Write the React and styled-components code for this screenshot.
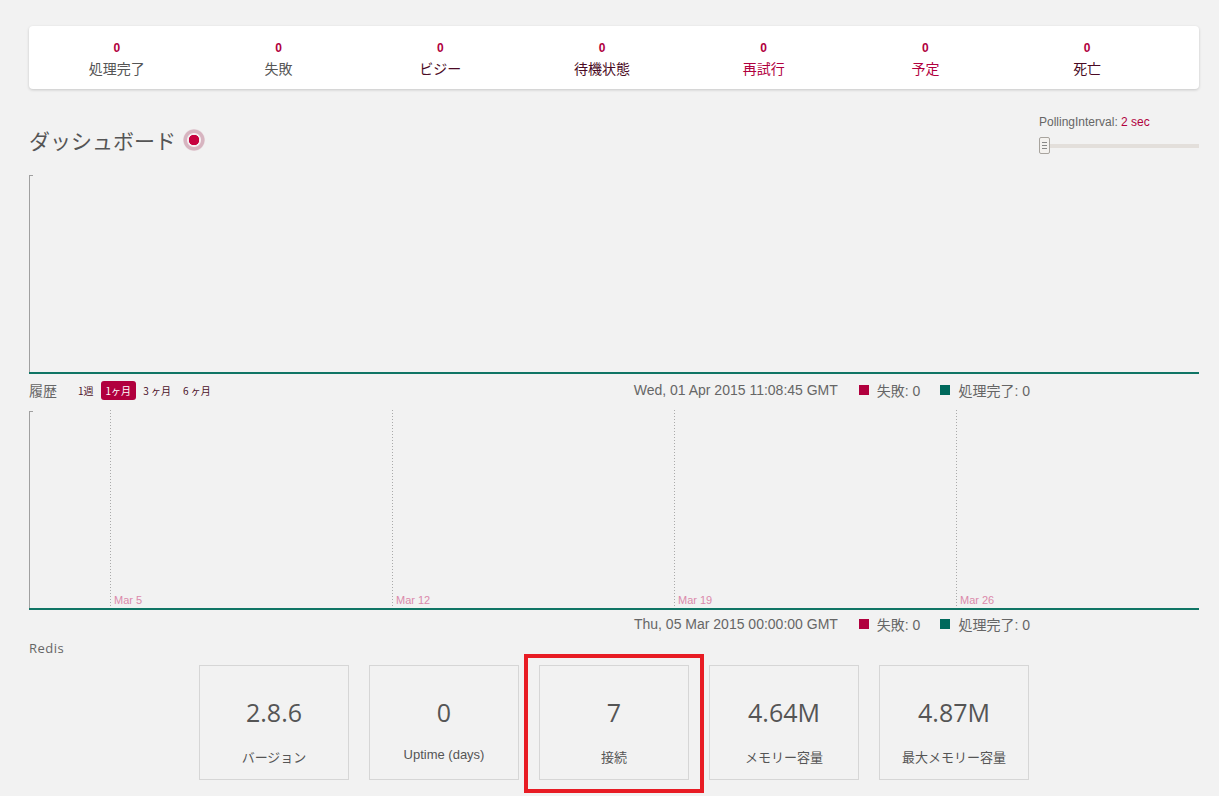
import React from 'react'
import styled, { createGlobalStyle } from 'styled-components'

const GlobalStyle = createGlobalStyle`
  html, body {
    margin: 0;
    padding: 0;
    background: #f2f2f2;
    font-family: "Liberation Sans", Arial, "Noto Sans CJK JP", sans-serif;
    color: #555;
  }
`

const Page = styled.div`
  width: 1170px;
  padding: 26px 0 20px 29px;
`

// ---- summary bar
const Summary = styled.div`
  background: #fff;
  border-radius: 4px;
  box-shadow: 0 1px 3px rgba(0, 0, 0, 0.18);
  height: 63px;
  padding: 0 31px 0 7px;
  display: grid;
  grid-template-columns: repeat(7, 1fr);
  box-sizing: border-box;
`

const Stat = styled.div`
  display: flex;
  flex-direction: column;
  align-items: center;
  padding-top: 15px;
`

const StatNum = styled.span`
  font-family: "Liberation Sans", Arial, sans-serif;
  font-weight: bold;
  font-size: 12px;
  line-height: 14px;
  color: #b1003e;
`

const StatLabel = styled.span`
  font-family: "Noto Sans CJK JP", sans-serif;
  font-size: 14px;
  line-height: 20px;
  margin-top: 3px;
  color: ${p => p.$color};
`

// ---- dashboard header
const Header = styled.div`
  display: flex;
  justify-content: space-between;
  align-items: flex-start;
  margin-top: 25px;
  height: 60px;
`

const Title = styled.h3`
  margin: 11px 0 0;
  font-family: "Noto Sans CJK JP", sans-serif;
  font-weight: normal;
  font-size: 21px;
  line-height: 30px;
  color: #555;
  display: flex;
  align-items: center;
  gap: 7px;
`

const Beacon = styled.span`
  width: 22px;
  height: 22px;
  border-radius: 50%;
  background: radial-gradient(circle, #c7003f 0 5px, #f4eef0 5.5px 6.5px, #d7b4c0 7.5px 10px, rgba(215, 180, 192, 0.3) 11px);
`

const Polling = styled.div`
  width: 160px;
  margin-top: 1px;
  font-size: 12px;
  line-height: 14px;
`

const PollText = styled.div`
  color: #666;
  span { color: #b1003e; }
`

const Slider = styled.div`
  position: relative;
  margin-top: 8px;
  height: 17px;
  display: flex;
  align-items: center;
`

const Track = styled.div`
  flex: 1;
  height: 4px;
  background: #e3dfdb;
  margin-left: 1px;
`

const Handle = styled.div`
  position: absolute;
  left: 0;
  top: 0;
  width: 9px;
  height: 15px;
  border: 1px solid #a8a49e;
  border-radius: 2px;
  background: #f4f2ef;
  display: flex;
  flex-direction: column;
  justify-content: center;
  align-items: center;
  gap: 2px;
  i {
    display: block;
    width: 5px;
    height: 1px;
    background: #888;
  }
`

// ---- charts
const ChartBox = styled.div`
  height: ${p => p.$h}px;
  svg { display: block; }
`

const LegendRow = styled.div`
  display: flex;
  align-items: center;
  height: ${p => p.$h}px;
  padding-bottom: ${p => p.$pb || 0}px;
  font-size: 14px;
  color: #666;
`

const HistLabel = styled.span`
  font-family: "Noto Sans CJK JP", sans-serif;
  font-size: 14px;
  color: #666;
  margin-right: 16px;
`

const RangeBtn = styled.span`
  font-family: "Noto Sans CJK JP", sans-serif;
  font-size: 10px;
  line-height: 19px;
  padding: 0 5px;
  border-radius: 3px;
  margin-right: 2px;
  background: ${p => (p.$active ? '#b1003e' : 'transparent')};
  color: ${p => (p.$active ? '#fff' : '#4a1028')};
`

const Spacer = styled.div`
  flex: 1;
`

const Stamp = styled.span`
  margin-right: 21px;
`

const Legend = styled.span`
  display: flex;
  align-items: center;
  margin-right: ${p => p.$mr}px;
  font-family: "Liberation Sans", Arial, "Noto Sans CJK JP", sans-serif;
  &::before {
    content: '';
    width: 10px;
    height: 10px;
    background: ${p => p.$color};
    margin-right: 8px;
  }
`

// ---- redis
const SectionLabel = styled.div`
  font-family: "Open Sans", sans-serif;
  font-size: 13px;
  letter-spacing: 0.5px;
  color: #666;
  line-height: 20px;
`

const BoxRow = styled.div`
  display: flex;
  justify-content: center;
  gap: 20px;
  margin-top: 7px;
`

const Box = styled.div`
  position: relative;
  width: 150px;
  height: 115px;
  box-sizing: border-box;
  border: 1px solid #d6d6d6;
  display: flex;
  flex-direction: column;
  align-items: center;
`

const BoxValue = styled.div`
  font-family: "Open Sans", sans-serif;
  font-size: 25px;
  color: #555;
  margin-top: 29px;
  line-height: 34px;
`

const BoxLabel = styled.div`
  font-family: "Liberation Sans", Arial, "Noto Sans CJK JP", sans-serif;
  font-size: 13px;
  color: #555;
  margin-top: 18px;
`

const Highlight = styled.div`
  position: absolute;
  left: -16px;
  top: -12px;
  right: -16px;
  bottom: -14px;
  border: 4px solid #e81c24;
`

const stats = [
  ['処理完了', '#555'],
  ['失敗', '#555'],
  ['ビジー', '#4a0a24'],
  ['待機状態', '#4a0a24'],
  ['再試行', '#b1003e'],
  ['予定', '#b1003e'],
  ['死亡', '#4a0a24'],
]

const redis = [
  ['2.8.6', 'バージョン'],
  ['0', 'Uptime (days)'],
  ['7', '接続', true],
  ['4.64M', 'メモリー容量'],
  ['4.87M', '最大メモリー容量'],
]

const ticks = [
  [81, 'Mar 5'],
  [363, 'Mar 12'],
  [645, 'Mar 19'],
  [927, 'Mar 26'],
]

function Axis({ h, children }) {
  return (
    <svg width="1170" height={h}>
      <line x1="0.5" y1="1" x2="0.5" y2={h - 1} stroke="#a0a0a0" />
      <line x1="0.5" y1="1.5" x2="4" y2="1.5" stroke="#a0a0a0" />
      {children}
      <line x1="0" y1={h - 1} x2="1170" y2={h - 1} stroke="#107565" strokeWidth="2" />
    </svg>
  )
}

function LegendItems() {
  return (
    <>
      <Legend $color="#b1003e" $mr={20}>失敗: 0</Legend>
      <Legend $color="#00695c" $mr={169}>処理完了: 0</Legend>
    </>
  )
}

export default function App() {
  return (
    <Page>
      <GlobalStyle />
      <Summary>
        {stats.map(([label, color]) => (
          <Stat key={label}>
            <StatNum>0</StatNum>
            <StatLabel $color={color}>{label}</StatLabel>
          </Stat>
        ))}
      </Summary>

      <Header>
        <Title>
          ダッシュボード
          <Beacon />
        </Title>
        <Polling>
          <PollText>
            PollingInterval: <span>2 sec</span>
          </PollText>
          <Slider>
            <Track />
            <Handle>
              <i />
              <i />
              <i />
            </Handle>
          </Slider>
        </Polling>
      </Header>

      <ChartBox $h={200}>
        <Axis h={200} />
      </ChartBox>

      <LegendRow $h={32} $pb={4}>
        <HistLabel>履歴</HistLabel>
        <RangeBtn>1週</RangeBtn>
        <RangeBtn $active>1ヶ月</RangeBtn>
        <RangeBtn>3 ヶ月</RangeBtn>
        <RangeBtn>6 ヶ月</RangeBtn>
        <Spacer />
        <Stamp>Wed, 01 Apr 2015 11:08:45 GMT</Stamp>
        <LegendItems />
      </LegendRow>

      <ChartBox $h={200}>
        <Axis h={200}>
          {ticks.map(([x, label]) => (
            <g key={label}>
              <line x1={x + 0.5} y1="0" x2={x + 0.5} y2="198" stroke="#aaa" strokeDasharray="1 2" />
              <text x={x + 4} y="194" fontSize="11" fill="#db8aab" fontFamily="Liberation Sans, Arial, sans-serif">
                {label}
              </text>
            </g>
          ))}
        </Axis>
      </ChartBox>

      <LegendRow $h={28}>
        <Spacer />
        <Stamp>Thu, 05 Mar 2015 00:00:00 GMT</Stamp>
        <LegendItems />
      </LegendRow>

      <SectionLabel>Redis</SectionLabel>
      <BoxRow>
        {redis.map(([value, label, hl]) => (
          <Box key={label}>
            <BoxValue>{value}</BoxValue>
            <BoxLabel>{label}</BoxLabel>
            {hl && <Highlight />}
          </Box>
        ))}
      </BoxRow>
    </Page>
  )
}
